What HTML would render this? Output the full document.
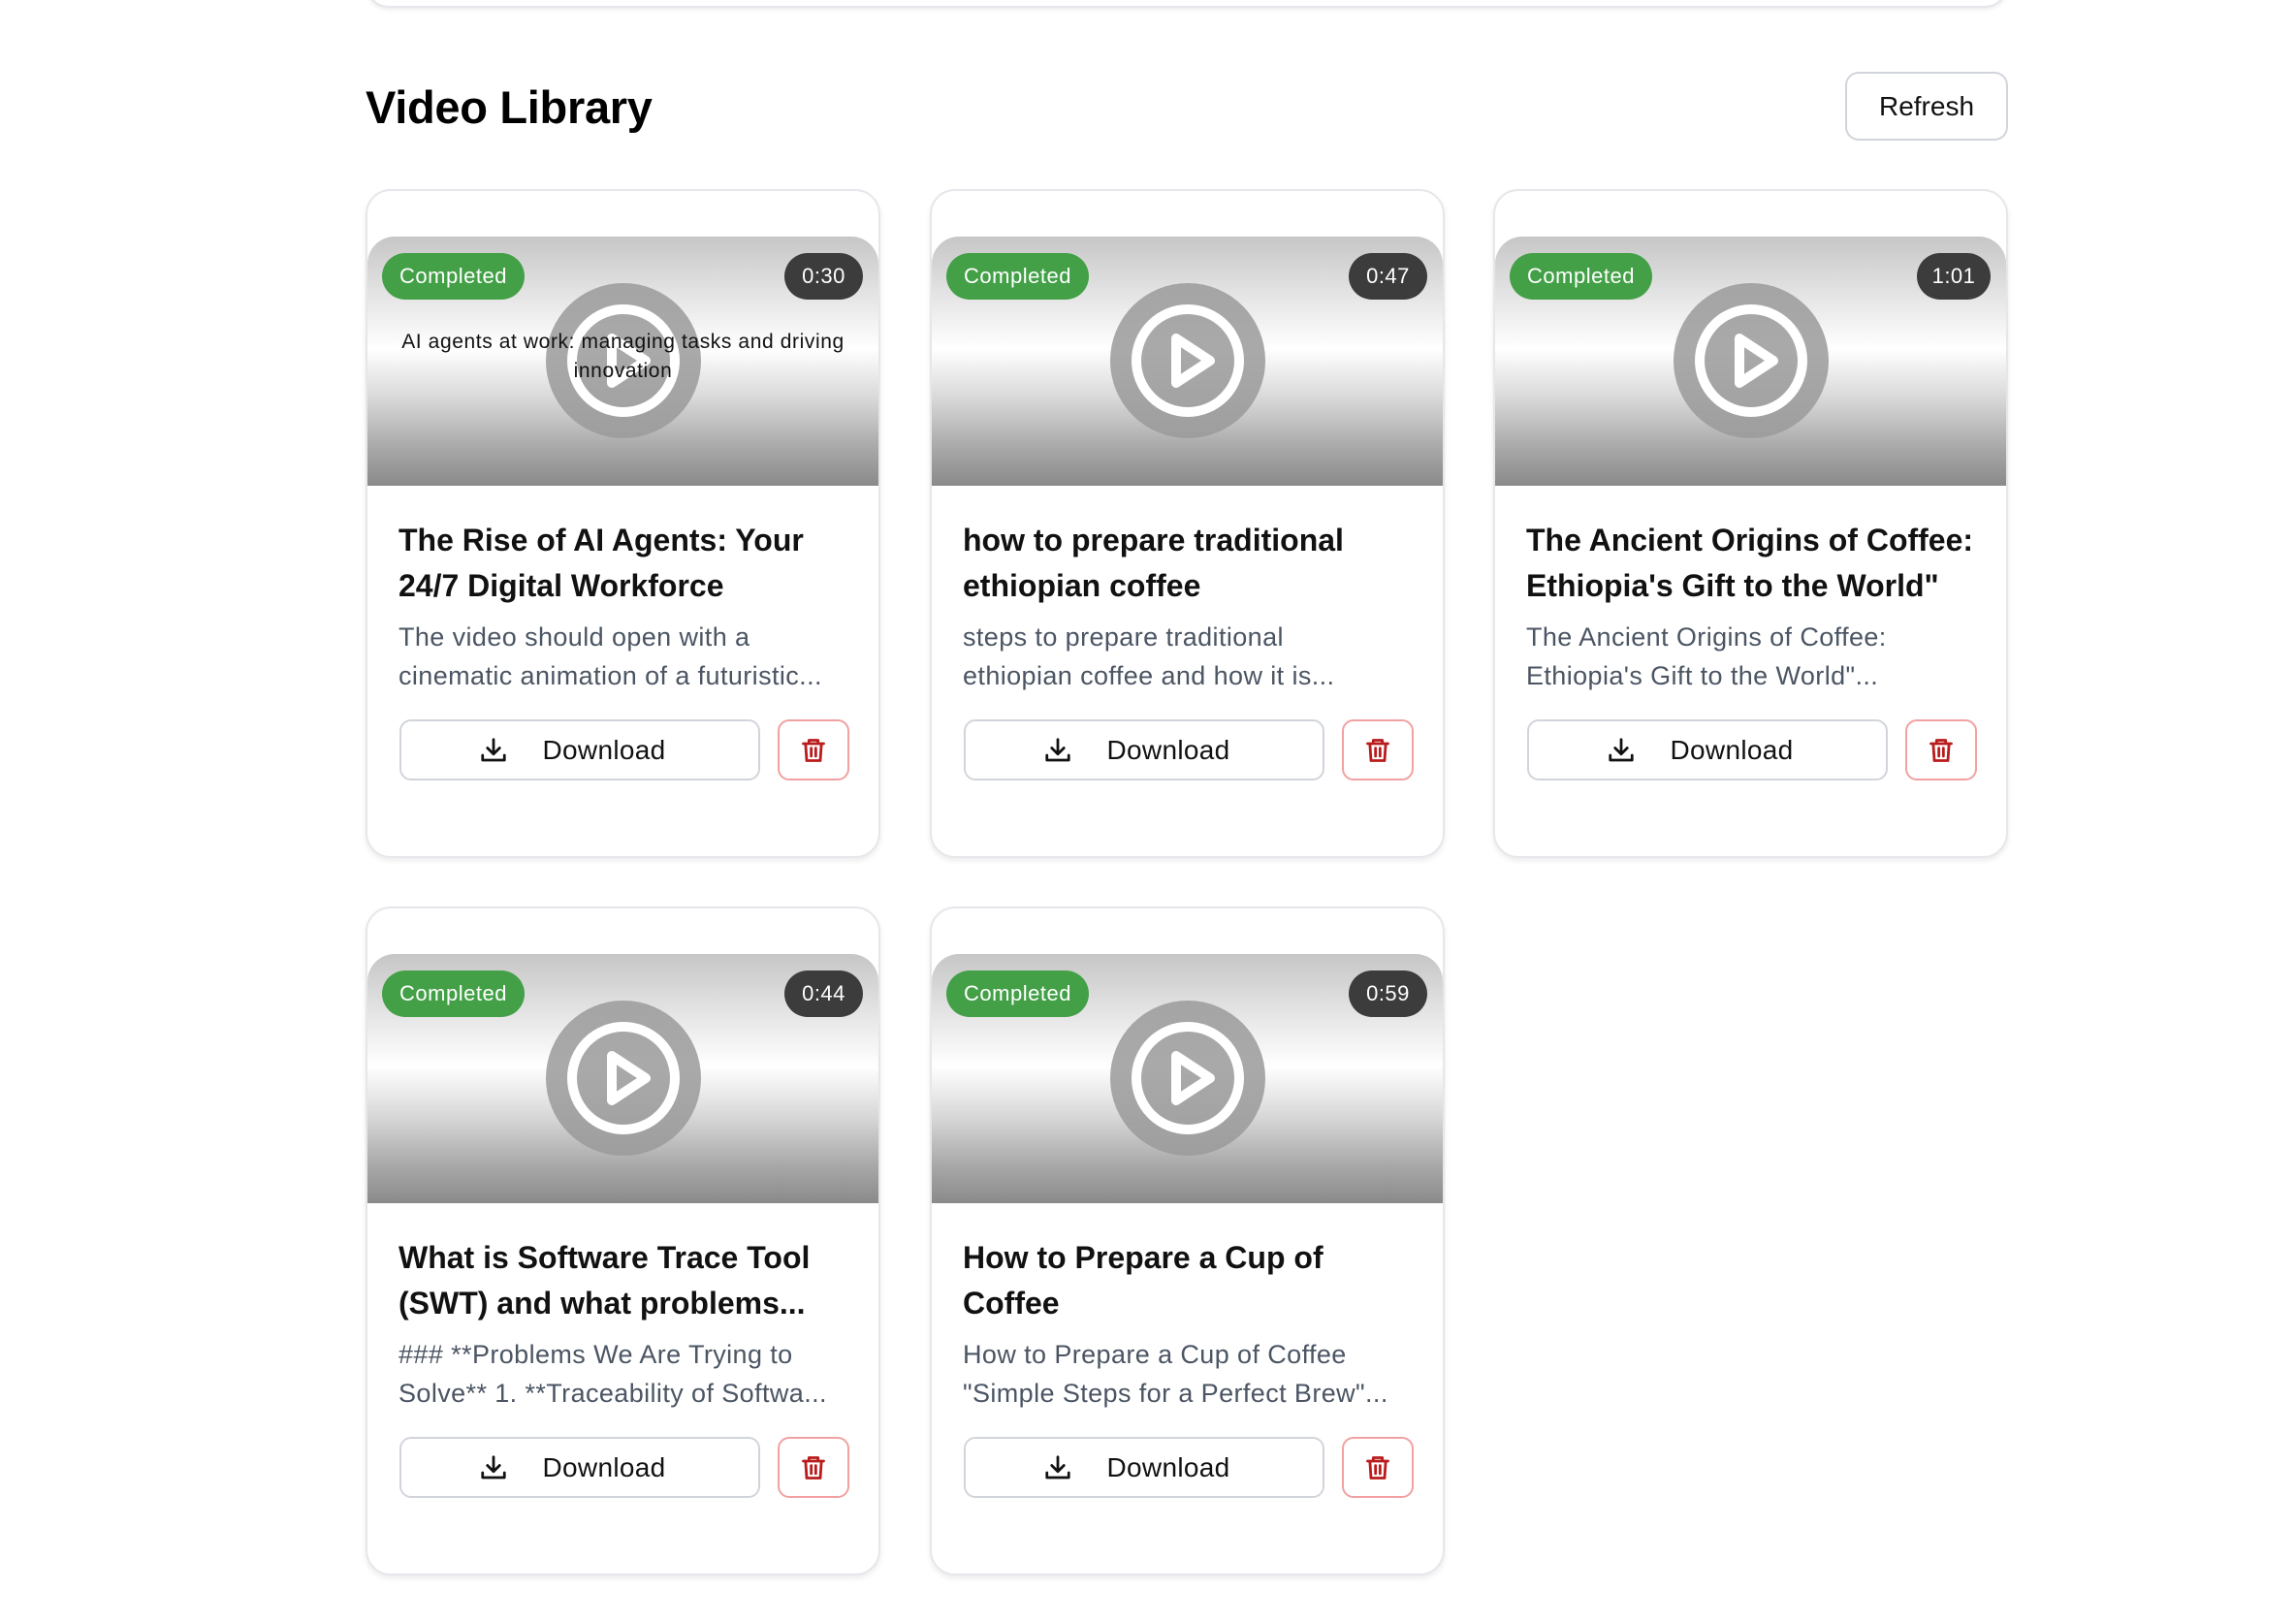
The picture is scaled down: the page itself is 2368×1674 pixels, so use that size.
<!DOCTYPE html>
<html><head><meta charset="utf-8"><style>
*{box-sizing:border-box;margin:0;padding:0}
body{width:2368px;height:1674px;background:#fff;font-family:"Liberation Sans",sans-serif;position:relative;overflow:hidden}
.topcard{position:absolute;left:377px;top:-40px;width:1694px;height:48px;border:2px solid #e5e7eb;border-radius:24px;box-shadow:0 2px 4px rgba(0,0,0,.08)}
h1{position:absolute;left:377px;top:83px;font-size:47px;font-weight:bold;color:#000;line-height:56px;letter-spacing:-0.3px}
.refresh{position:absolute;left:1903px;top:74px;width:168px;height:71px;border:2px solid #d1d5db;border-radius:14px;font-size:28px;display:flex;align-items:center;justify-content:center;color:#111}
.card{position:absolute;width:531px;height:690px;border:2px solid #e5e7eb;border-radius:26px;box-shadow:0 3px 6px rgba(0,0,0,.08);background:#fff;overflow:hidden}
.thumb{position:absolute;left:0;top:47px;width:100%;height:257px;border-radius:28px 28px 0 0;background:linear-gradient(#c6c6c6 0%,#e6e6e6 25%,#fff 45%,#d8d8d8 65%,#a8a8a8 85%,#8a8a8a 100%)}
.badge{position:absolute;left:15px;top:17px;height:48px;width:147px;border-radius:24px;background:#43a047;color:#fff;font-size:22px;display:flex;align-items:center;justify-content:center;letter-spacing:.5px}
.dur{position:absolute;right:16px;top:17px;height:48px;width:81px;border-radius:24px;background:#3c3c3c;color:#fff;font-size:22px;display:flex;align-items:center;justify-content:center;letter-spacing:.5px}
.play{position:absolute;left:183px;top:47px}
.cap{position:absolute;left:0;right:0;top:94px;text-align:center;font-size:21px;line-height:30px;color:#111;padding:0 20px;letter-spacing:0.6px}
.title{position:absolute;left:32px;top:337px;right:28px;font-size:32px;font-weight:bold;line-height:47px;color:#111}
.desc{position:absolute;left:32px;top:440px;right:40px;font-size:27px;line-height:40px;color:#4b5563;letter-spacing:0.4px}
.dl{position:absolute;left:33px;top:545px;width:372px;height:63px;border:2px solid #d1d5db;border-radius:12px;display:flex;align-items:center;justify-content:center;font-size:28px;color:#111;letter-spacing:0.3px}
.dl svg{margin-right:36px;margin-left:-16px}
.del{position:absolute;left:423px;top:545px;width:74px;height:63px;border:2px solid #f1a1a1;border-radius:12px;display:flex;align-items:center;justify-content:center}
</style></head><body>
<div class="topcard"></div>
<h1>Video Library</h1>
<div class="refresh">Refresh</div>

<div class="card" style="left:377px;top:195px">
<div class="thumb"><div class="badge">Completed</div><div class="dur">0:30</div>
<svg class="play" width="162" height="162" viewBox="0 0 162 162"><circle cx="81" cy="81" r="80" fill="#9a9a9a" opacity=".85"/><circle cx="81" cy="81" r="53" fill="none" stroke="#fff" stroke-width="10"/><path d="M69 58 L104 81 L69 104 Z" fill="none" stroke="#fff" stroke-width="10" stroke-linejoin="round"/></svg>
<div class="cap">AI agents at work: managing tasks and driving innovation</div></div>
<div class="title">The Rise of AI Agents: Your 24/7 Digital Workforce</div>
<div class="desc">The video should open with a cinematic animation of a futuristic...</div>
<div class="dl"><svg width="30" height="30" viewBox="0 0 24 24" fill="none" stroke="#111" stroke-width="2.2" stroke-linecap="round" stroke-linejoin="round"><path d="M12 3v12M7 10l5 5 5-5M3 16v4h18v-4"/></svg>Download</div>
<div class="del"><svg width="28" height="30" viewBox="0 0 24 24" fill="none" stroke="#b91c1c" stroke-width="2.4" stroke-linecap="round" stroke-linejoin="round"><path d="M3 6h18M8 6V3h8v3M5 6l1 15h12l1-15M10 10v7M14 10v7"/></svg></div>
</div>

<div class="card" style="left:959px;top:195px">
<div class="thumb"><div class="badge">Completed</div><div class="dur">0:47</div>
<svg class="play" width="162" height="162" viewBox="0 0 162 162"><circle cx="81" cy="81" r="80" fill="#9a9a9a" opacity=".85"/><circle cx="81" cy="81" r="53" fill="none" stroke="#fff" stroke-width="10"/><path d="M69 58 L104 81 L69 104 Z" fill="none" stroke="#fff" stroke-width="10" stroke-linejoin="round"/></svg></div>
<div class="title">how to prepare traditional ethiopian coffee</div>
<div class="desc">steps to prepare traditional<br>ethiopian coffee and how it is...</div>
<div class="dl"><svg width="30" height="30" viewBox="0 0 24 24" fill="none" stroke="#111" stroke-width="2.2" stroke-linecap="round" stroke-linejoin="round"><path d="M12 3v12M7 10l5 5 5-5M3 16v4h18v-4"/></svg>Download</div>
<div class="del"><svg width="28" height="30" viewBox="0 0 24 24" fill="none" stroke="#b91c1c" stroke-width="2.4" stroke-linecap="round" stroke-linejoin="round"><path d="M3 6h18M8 6V3h8v3M5 6l1 15h12l1-15M10 10v7M14 10v7"/></svg></div>
</div>

<div class="card" style="left:1540px;top:195px">
<div class="thumb"><div class="badge">Completed</div><div class="dur" style="width:76px">1:01</div>
<svg class="play" width="162" height="162" viewBox="0 0 162 162"><circle cx="81" cy="81" r="80" fill="#9a9a9a" opacity=".85"/><circle cx="81" cy="81" r="53" fill="none" stroke="#fff" stroke-width="10"/><path d="M69 58 L104 81 L69 104 Z" fill="none" stroke="#fff" stroke-width="10" stroke-linejoin="round"/></svg></div>
<div class="title">The Ancient Origins of Coffee: Ethiopia's Gift to the World"</div>
<div class="desc">The Ancient Origins of Coffee: Ethiopia's Gift to the World"...</div>
<div class="dl"><svg width="30" height="30" viewBox="0 0 24 24" fill="none" stroke="#111" stroke-width="2.2" stroke-linecap="round" stroke-linejoin="round"><path d="M12 3v12M7 10l5 5 5-5M3 16v4h18v-4"/></svg>Download</div>
<div class="del"><svg width="28" height="30" viewBox="0 0 24 24" fill="none" stroke="#b91c1c" stroke-width="2.4" stroke-linecap="round" stroke-linejoin="round"><path d="M3 6h18M8 6V3h8v3M5 6l1 15h12l1-15M10 10v7M14 10v7"/></svg></div>
</div>

<div class="card" style="left:377px;top:935px">
<div class="thumb"><div class="badge">Completed</div><div class="dur">0:44</div>
<svg class="play" width="162" height="162" viewBox="0 0 162 162"><circle cx="81" cy="81" r="80" fill="#9a9a9a" opacity=".85"/><circle cx="81" cy="81" r="53" fill="none" stroke="#fff" stroke-width="10"/><path d="M69 58 L104 81 L69 104 Z" fill="none" stroke="#fff" stroke-width="10" stroke-linejoin="round"/></svg></div>
<div class="title">What is Software Trace Tool (SWT) and what problems...</div>
<div class="desc">### **Problems We Are Trying to Solve** 1. **Traceability of Softwa...</div>
<div class="dl"><svg width="30" height="30" viewBox="0 0 24 24" fill="none" stroke="#111" stroke-width="2.2" stroke-linecap="round" stroke-linejoin="round"><path d="M12 3v12M7 10l5 5 5-5M3 16v4h18v-4"/></svg>Download</div>
<div class="del"><svg width="28" height="30" viewBox="0 0 24 24" fill="none" stroke="#b91c1c" stroke-width="2.4" stroke-linecap="round" stroke-linejoin="round"><path d="M3 6h18M8 6V3h8v3M5 6l1 15h12l1-15M10 10v7M14 10v7"/></svg></div>
</div>

<div class="card" style="left:959px;top:935px">
<div class="thumb"><div class="badge">Completed</div><div class="dur">0:59</div>
<svg class="play" width="162" height="162" viewBox="0 0 162 162"><circle cx="81" cy="81" r="80" fill="#9a9a9a" opacity=".85"/><circle cx="81" cy="81" r="53" fill="none" stroke="#fff" stroke-width="10"/><path d="M69 58 L104 81 L69 104 Z" fill="none" stroke="#fff" stroke-width="10" stroke-linejoin="round"/></svg></div>
<div class="title">How to Prepare a Cup of Coffee</div>
<div class="desc">How to Prepare a Cup of Coffee "Simple Steps for a Perfect Brew"...</div>
<div class="dl"><svg width="30" height="30" viewBox="0 0 24 24" fill="none" stroke="#111" stroke-width="2.2" stroke-linecap="round" stroke-linejoin="round"><path d="M12 3v12M7 10l5 5 5-5M3 16v4h18v-4"/></svg>Download</div>
<div class="del"><svg width="28" height="30" viewBox="0 0 24 24" fill="none" stroke="#b91c1c" stroke-width="2.4" stroke-linecap="round" stroke-linejoin="round"><path d="M3 6h18M8 6V3h8v3M5 6l1 15h12l1-15M10 10v7M14 10v7"/></svg></div>
</div>
</body></html>
